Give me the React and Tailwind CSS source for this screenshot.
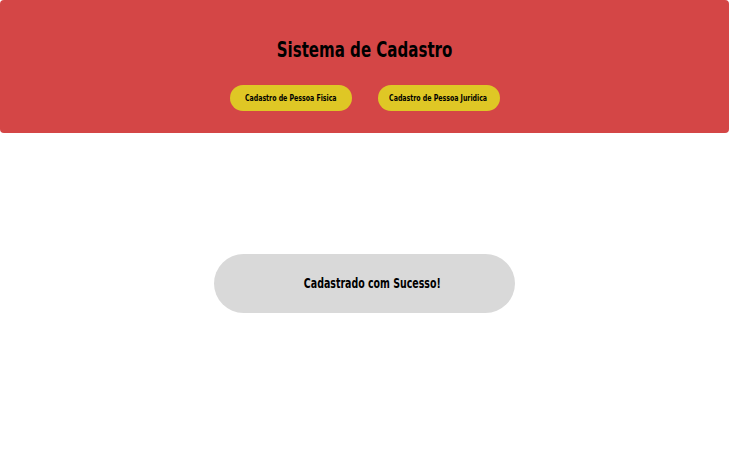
export default function App() {
  return (
    <div className="w-[729px] h-[457px] bg-white" style={{ fontFamily: '"DejaVu Sans Condensed", "DejaVu Sans", sans-serif' }}>
      <header className="h-[133px] bg-[#d44646] rounded-[4px] flex flex-col items-center pt-[36px]">
        <h1 className="text-[22px] leading-[28px] font-bold text-black whitespace-nowrap">
          <span className="inline-block scale-x-[0.76]">Sistema de Cadastro</span>
        </h1>
        <div className="flex gap-[26px] mt-[21px]">
          <button className="w-[122px] h-[26px] rounded-full bg-[#dfc725] text-[9.5px] font-bold text-black whitespace-nowrap flex items-center justify-center">
            <span className="inline-block scale-x-[0.73]">Cadastro de Pessoa Fisica</span>
          </button>
          <button className="w-[122px] h-[26px] rounded-full bg-[#dfc725] text-[9.5px] font-bold text-black whitespace-nowrap flex items-center justify-center">
            <span className="inline-block scale-x-[0.73]">Cadastro de Pessoa Juridica</span>
          </button>
        </div>
      </header>
      <div className="flex justify-center pt-[121px]">
        <div className="w-[301px] h-[59px] rounded-full bg-[#d9d9d9] flex items-center justify-center pl-[15px] text-[14px] font-bold text-black whitespace-nowrap">
          <span className="inline-block scale-x-[0.75]">Cadastrado com Sucesso!</span>
        </div>
      </div>
    </div>
  );
}
